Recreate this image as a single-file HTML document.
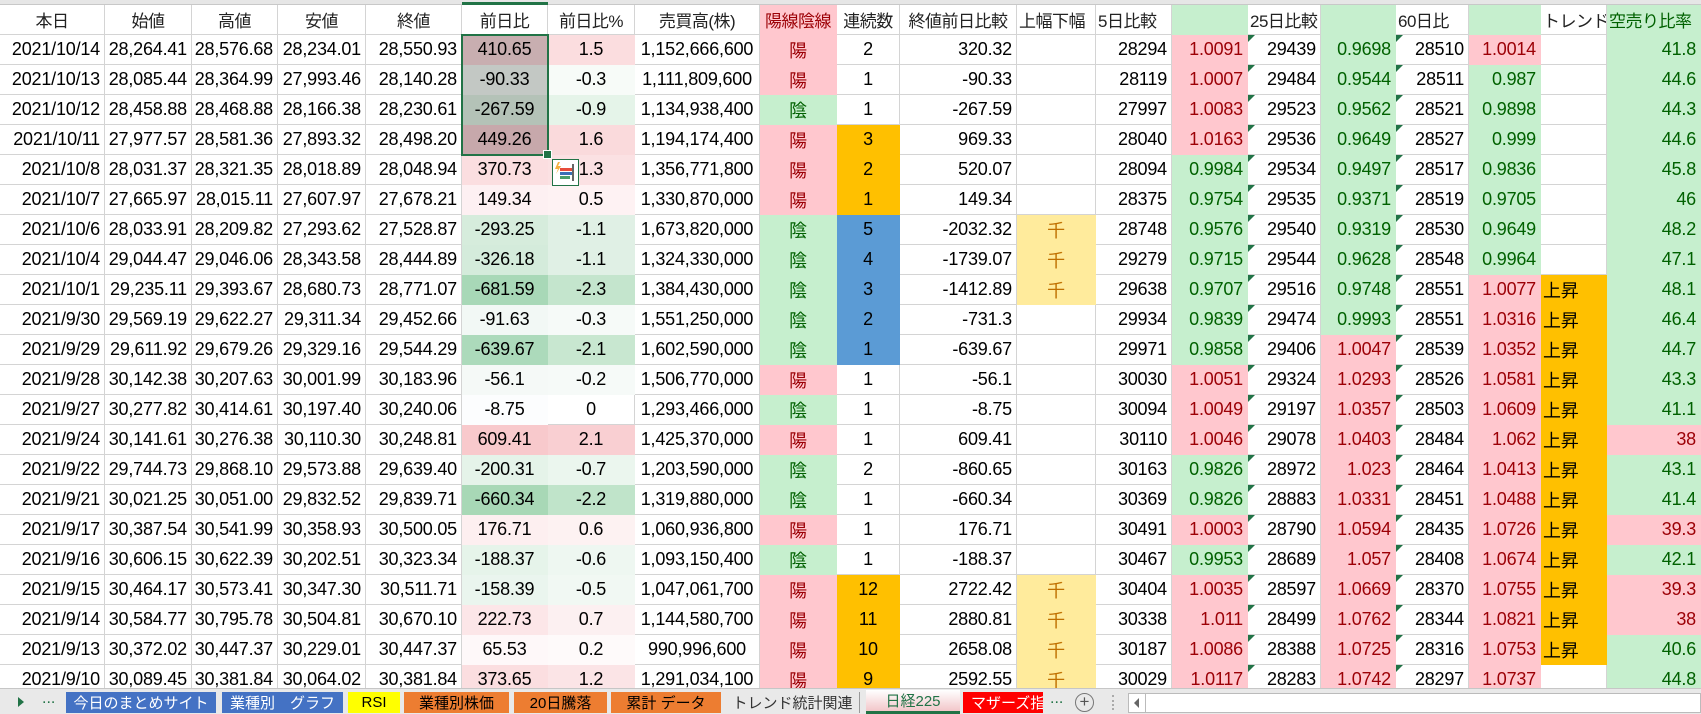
<!DOCTYPE html>
<html><head><meta charset="utf-8">
<style>
*{box-sizing:border-box;margin:0;padding:0}
body{width:1701px;height:714px;overflow:hidden;background:#fff;font-family:"Liberation Sans","Noto Sans CJK JP",sans-serif;position:relative}
#strip{position:absolute;left:0;top:0;width:1701px;height:5px;background:#e6e6e6;border-bottom:1px solid #c8c8c8}
#grid{position:absolute;left:0;top:5px;display:grid;grid-template-columns:105px 87px 86px 88px 96px 86px 87px 125px 77px 63px 117px 79px 76px 76px 73px 75px 73px 72px 66px 94px;grid-auto-rows:30px;font-size:18px;letter-spacing:-0.2px;color:#000}
#grid>div{border-right:1px solid #d4d4d4;border-bottom:1px solid #d4d4d4;display:flex;align-items:center;justify-content:flex-end;padding-right:4px;white-space:nowrap;overflow:hidden;position:relative}
#grid>div.h{justify-content:center;padding:0;color:#222;font-size:17px;letter-spacing:-0.5px}
#grid>div.hl{justify-content:flex-start;padding-left:2px;color:#222;font-size:17px;letter-spacing:-0.5px}
#grid>div.c{justify-content:center;padding:0}
.p{background:#ffc7ce;border-color:#ffc7ce!important;color:#9c0006!important}
.g{background:#c6efce;border-color:#c6efce!important;color:#006100!important}
.y{background:#ffeb9c;border-color:#ffeb9c!important;color:#c07000!important}
.o{background:#ffc000;border-color:#ffc000!important}
.b{background:#5b9bd5;border-color:#5b9bd5!important}
.t::before{content:"";position:absolute;left:0;top:0;border-top:7px solid #217346;border-right:7px solid transparent}
#sel{position:absolute;left:461px;top:34px;width:88px;height:122px;border:2px solid #217346}
#sel::after{content:"";position:absolute;right:-5px;bottom:-5px;width:7px;height:7px;background:#217346;border:1px solid #fff}
#qa{position:absolute;left:552px;top:159px;width:27px;height:27px;border:1px solid #217346;background:#fff}
#tabs{position:absolute;left:0;top:688px;width:1701px;height:26px;background:#e9e9e9;border-top:1px solid #c6c6c6;font-size:15px}
.tab{position:absolute;top:3px;height:21px;display:flex;align-items:center;justify-content:center;white-space:nowrap;overflow:hidden}
</style></head><body>
<div id="strip"></div>
<div style="position:absolute;left:462px;top:2px;width:86px;height:3px;background:#217346"></div>
<div id="grid">
<div class="h">本日</div><div class="h">始値</div><div class="h">高値</div><div class="h">安値</div><div class="h">終値</div><div class="h">前日比</div><div class="h">前日比%</div><div class="h">売買高(株)</div><div class="h p">陽線陰線</div><div class="h">連続数</div><div class="h">終値前日比較</div><div class="hl">上幅下幅</div><div class="hl">5日比較</div><div class="hl g"></div><div class="hl">25日比較</div><div class="hl g"></div><div class="hl">60日比</div><div class="hl g"></div><div class="hl">トレンド</div><div class="hl g">空売り比率</div>

<div>2021/10/14</div><div>28,264.41</div><div>28,576.68</div><div>28,234.01</div><div>28,550.93</div><div class="c" style="background:#c8aeb0;border-color:#c8aeb0">410.65</div><div class="c" style="background:#fbdddf;border-color:#fbdddf">1.5</div><div class="c">1,152,666,600</div><div class="c p">陽</div><div class="c">2</div><div>320.32</div><div></div><div>28294</div><div class="p">1.0091</div><div class="t">29439</div><div class="g">0.9698</div><div class="t">28510</div><div class="p">1.0014</div><div></div><div class="g">41.8</div>

<div>2021/10/13</div><div>28,085.44</div><div>28,364.99</div><div>27,993.46</div><div>28,140.28</div><div class="c" style="background:#c3c8c4;border-color:#c3c8c4">-90.33</div><div class="c" style="background:#f7fbf8;border-color:#f7fbf8">-0.3</div><div class="c">1,111,809,600</div><div class="c p">陽</div><div class="c">1</div><div>-90.33</div><div></div><div>28119</div><div class="p">1.0007</div><div class="t">29484</div><div class="g">0.9544</div><div class="t">28511</div><div class="g">0.987</div><div></div><div class="g">44.6</div>

<div>2021/10/12</div><div>28,458.88</div><div>28,468.88</div><div>28,166.38</div><div>28,230.61</div><div class="c" style="background:#b4c2b7;border-color:#b4c2b7">-267.59</div><div class="c" style="background:#e5f4e9;border-color:#e5f4e9">-0.9</div><div class="c">1,134,938,400</div><div class="c g">陰</div><div class="c">1</div><div>-267.59</div><div></div><div>27997</div><div class="p">1.0083</div><div class="t">29523</div><div class="g">0.9562</div><div class="t">28521</div><div class="g">0.9898</div><div></div><div class="g">44.3</div>

<div>2021/10/11</div><div>27,977.57</div><div>28,581.36</div><div>27,893.32</div><div>28,498.20</div><div class="c" style="background:#c7a8ab;border-color:#c7a8ab">449.26</div><div class="c" style="background:#fadadc;border-color:#fadadc">1.6</div><div class="c">1,194,174,400</div><div class="c p">陽</div><div class="c o">3</div><div>969.33</div><div></div><div>28040</div><div class="p">1.0163</div><div class="t">29536</div><div class="g">0.9649</div><div class="t">28527</div><div class="g">0.999</div><div></div><div class="g">44.6</div>

<div>2021/10/8</div><div>28,031.37</div><div>28,321.35</div><div>28,018.89</div><div>28,048.94</div><div class="c" style="background:#fbdee0;border-color:#fbdee0">370.73</div><div class="c" style="background:#fbe1e3;border-color:#fbe1e3">1.3</div><div class="c">1,356,771,800</div><div class="c p">陽</div><div class="c o">2</div><div>520.07</div><div></div><div>28094</div><div class="g">0.9984</div><div class="t">29534</div><div class="g">0.9497</div><div class="t">28517</div><div class="g">0.9836</div><div></div><div class="g">45.8</div>

<div>2021/10/7</div><div>27,665.97</div><div>28,015.11</div><div>27,607.97</div><div>27,678.21</div><div class="c" style="background:#fdf0f2;border-color:#fdf0f2">149.34</div><div class="c" style="background:#fef2f3;border-color:#fef2f3">0.5</div><div class="c">1,330,870,000</div><div class="c p">陽</div><div class="c o">1</div><div>149.34</div><div></div><div>28375</div><div class="g">0.9754</div><div class="t">29535</div><div class="g">0.9371</div><div class="t">28519</div><div class="g">0.9705</div><div></div><div class="g">46</div>

<div>2021/10/6</div><div>28,033.91</div><div>28,209.82</div><div>27,293.62</div><div>27,528.87</div><div class="c" style="background:#d6ecdc;border-color:#d6ecdc">-293.25</div><div class="c" style="background:#e0f0e5;border-color:#e0f0e5">-1.1</div><div class="c">1,673,820,000</div><div class="c g">陰</div><div class="c b">5</div><div>-2032.32</div><div class="c y">千</div><div>28748</div><div class="g">0.9576</div><div class="t">29540</div><div class="g">0.9319</div><div class="t">28530</div><div class="g">0.9649</div><div></div><div class="g">48.2</div>

<div>2021/10/4</div><div>29,044.47</div><div>29,046.06</div><div>28,343.58</div><div>28,444.89</div><div class="c" style="background:#d4ebdb;border-color:#d4ebdb">-326.18</div><div class="c" style="background:#e0f0e5;border-color:#e0f0e5">-1.1</div><div class="c">1,324,330,000</div><div class="c g">陰</div><div class="c b">4</div><div>-1739.07</div><div class="c y">千</div><div>29279</div><div class="g">0.9715</div><div class="t">29544</div><div class="g">0.9628</div><div class="t">28548</div><div class="g">0.9964</div><div></div><div class="g">47.1</div>

<div>2021/10/1</div><div>29,235.11</div><div>29,393.67</div><div>28,680.73</div><div>28,771.07</div><div class="c" style="background:#a8d8b7;border-color:#a8d8b7">-681.59</div><div class="c" style="background:#c4e5cd;border-color:#c4e5cd">-2.3</div><div class="c">1,384,430,000</div><div class="c g">陰</div><div class="c b">3</div><div>-1412.89</div><div class="c y">千</div><div>29638</div><div class="g">0.9707</div><div class="t">29516</div><div class="g">0.9748</div><div class="t">28551</div><div class="p">1.0077</div><div class="o" style="justify-content:flex-start;padding-left:2px">上昇</div><div class="g">48.1</div>

<div>2021/9/30</div><div>29,569.19</div><div>29,622.27</div><div>29,311.34</div><div>29,452.66</div><div class="c" style="background:#f2f8f5;border-color:#f2f8f5">-91.63</div><div class="c" style="background:#f6faf8;border-color:#f6faf8">-0.3</div><div class="c">1,551,250,000</div><div class="c g">陰</div><div class="c b">2</div><div>-731.3</div><div></div><div>29934</div><div class="g">0.9839</div><div class="t">29474</div><div class="g">0.9993</div><div class="t">28551</div><div class="p">1.0316</div><div class="o" style="justify-content:flex-start;padding-left:2px">上昇</div><div class="g">46.4</div>

<div>2021/9/29</div><div>29,611.92</div><div>29,679.26</div><div>29,329.16</div><div>29,544.29</div><div class="c" style="background:#acdabb;border-color:#acdabb">-639.67</div><div class="c" style="background:#c8e7d0;border-color:#c8e7d0">-2.1</div><div class="c">1,602,590,000</div><div class="c g">陰</div><div class="c b">1</div><div>-639.67</div><div></div><div>29971</div><div class="g">0.9858</div><div class="t">29406</div><div class="p">1.0047</div><div class="t">28539</div><div class="p">1.0352</div><div class="o" style="justify-content:flex-start;padding-left:2px">上昇</div><div class="g">44.7</div>

<div>2021/9/28</div><div>30,142.38</div><div>30,207.63</div><div>30,001.99</div><div>30,183.96</div><div class="c" style="background:#f5f9f7;border-color:#f5f9f7">-56.1</div><div class="c" style="background:#f6faf8;border-color:#f6faf8">-0.2</div><div class="c">1,506,770,000</div><div class="c p">陽</div><div class="c">1</div><div>-56.1</div><div></div><div>30030</div><div class="p">1.0051</div><div class="t">29324</div><div class="p">1.0293</div><div class="t">28526</div><div class="p">1.0581</div><div class="o" style="justify-content:flex-start;padding-left:2px">上昇</div><div class="g">43.3</div>

<div>2021/9/27</div><div>30,277.82</div><div>30,414.61</div><div>30,197.40</div><div>30,240.06</div><div class="c" style="background:#fcfdfe;border-color:#fcfdfe">-8.75</div><div class="c">0</div><div class="c">1,293,466,000</div><div class="c g">陰</div><div class="c">1</div><div>-8.75</div><div></div><div>30094</div><div class="p">1.0049</div><div class="t">29197</div><div class="p">1.0357</div><div class="t">28503</div><div class="p">1.0609</div><div class="o" style="justify-content:flex-start;padding-left:2px">上昇</div><div class="g">41.1</div>

<div>2021/9/24</div><div>30,141.61</div><div>30,276.38</div><div>30,110.30</div><div>30,248.81</div><div class="c" style="background:#f8c9cc;border-color:#f8c9cc">609.41</div><div class="c" style="background:#f9cfd2;border-color:#f9cfd2">2.1</div><div class="c">1,425,370,000</div><div class="c p">陽</div><div class="c">1</div><div>609.41</div><div></div><div>30110</div><div class="p">1.0046</div><div class="t">29078</div><div class="p">1.0403</div><div class="t">28484</div><div class="p">1.062</div><div class="o" style="justify-content:flex-start;padding-left:2px">上昇</div><div class="p">38</div>

<div>2021/9/22</div><div>29,744.73</div><div>29,868.10</div><div>29,573.88</div><div>29,639.40</div><div class="c" style="background:#e5f3e9;border-color:#e5f3e9">-200.31</div><div class="c" style="background:#ebf6ee;border-color:#ebf6ee">-0.7</div><div class="c">1,203,590,000</div><div class="c g">陰</div><div class="c">2</div><div>-860.65</div><div></div><div>30163</div><div class="g">0.9826</div><div class="t">28972</div><div class="p">1.023</div><div class="t">28464</div><div class="p">1.0413</div><div class="o" style="justify-content:flex-start;padding-left:2px">上昇</div><div class="g">43.1</div>

<div>2021/9/21</div><div>30,021.25</div><div>30,051.00</div><div>29,832.52</div><div>29,839.71</div><div class="c" style="background:#a8d8b6;border-color:#a8d8b6">-660.34</div><div class="c" style="background:#c0e4ca;border-color:#c0e4ca">-2.2</div><div class="c">1,319,880,000</div><div class="c g">陰</div><div class="c">1</div><div>-660.34</div><div></div><div>30369</div><div class="g">0.9826</div><div class="t">28883</div><div class="p">1.0331</div><div class="t">28451</div><div class="p">1.0488</div><div class="o" style="justify-content:flex-start;padding-left:2px">上昇</div><div class="g">41.4</div>

<div>2021/9/17</div><div>30,387.54</div><div>30,541.99</div><div>30,358.93</div><div>30,500.05</div><div class="c" style="background:#fdeff0;border-color:#fdeff0">176.71</div><div class="c" style="background:#fdf2f2;border-color:#fdf2f2">0.6</div><div class="c">1,060,936,800</div><div class="c p">陽</div><div class="c">1</div><div>176.71</div><div></div><div>30491</div><div class="p">1.0003</div><div class="t">28790</div><div class="p">1.0594</div><div class="t">28435</div><div class="p">1.0726</div><div class="o" style="justify-content:flex-start;padding-left:2px">上昇</div><div class="p">39.3</div>

<div>2021/9/16</div><div>30,606.15</div><div>30,622.39</div><div>30,202.51</div><div>30,323.34</div><div class="c" style="background:#e6f4ea;border-color:#e6f4ea">-188.37</div><div class="c" style="background:#eef7f1;border-color:#eef7f1">-0.6</div><div class="c">1,093,150,400</div><div class="c g">陰</div><div class="c">1</div><div>-188.37</div><div></div><div>30467</div><div class="g">0.9953</div><div class="t">28689</div><div class="p">1.057</div><div class="t">28408</div><div class="p">1.0674</div><div class="o" style="justify-content:flex-start;padding-left:2px">上昇</div><div class="g">42.1</div>

<div>2021/9/15</div><div>30,464.17</div><div>30,573.41</div><div>30,347.30</div><div>30,511.71</div><div class="c" style="background:#eaf5ee;border-color:#eaf5ee">-158.39</div><div class="c" style="background:#f1f8f3;border-color:#f1f8f3">-0.5</div><div class="c">1,047,061,700</div><div class="c p">陽</div><div class="c o">12</div><div>2722.42</div><div class="c y">千</div><div>30404</div><div class="p">1.0035</div><div class="t">28597</div><div class="p">1.0669</div><div class="t">28370</div><div class="p">1.0755</div><div class="o" style="justify-content:flex-start;padding-left:2px">上昇</div><div class="p">39.3</div>

<div>2021/9/14</div><div>30,584.77</div><div>30,795.78</div><div>30,504.81</div><div>30,670.10</div><div class="c" style="background:#fce6e8;border-color:#fce6e8">222.73</div><div class="c" style="background:#fcf0f1;border-color:#fcf0f1">0.7</div><div class="c">1,144,580,700</div><div class="c p">陽</div><div class="c o">11</div><div>2880.81</div><div class="c y">千</div><div>30338</div><div class="p">1.011</div><div class="t">28499</div><div class="p">1.0762</div><div class="t">28344</div><div class="p">1.0821</div><div class="o" style="justify-content:flex-start;padding-left:2px">上昇</div><div class="p">38</div>

<div>2021/9/13</div><div>30,372.02</div><div>30,447.37</div><div>30,229.01</div><div>30,447.37</div><div class="c" style="background:#fef8f9;border-color:#fef8f9">65.53</div><div class="c" style="background:#fefafa;border-color:#fefafa">0.2</div><div class="c">990,996,600</div><div class="c p">陽</div><div class="c o">10</div><div>2658.08</div><div class="c y">千</div><div>30187</div><div class="p">1.0086</div><div class="t">28388</div><div class="p">1.0725</div><div class="t">28316</div><div class="p">1.0753</div><div class="o" style="justify-content:flex-start;padding-left:2px">上昇</div><div class="g">40.6</div>

<div>2021/9/10</div><div>30,089.45</div><div>30,381.84</div><div>30,064.02</div><div>30,381.84</div><div class="c" style="background:#fbdee0;border-color:#fbdee0">373.65</div><div class="c" style="background:#fbe4e6;border-color:#fbe4e6">1.2</div><div class="c">1,291,034,100</div><div class="c p">陽</div><div class="c o">9</div><div>2592.55</div><div class="c y">千</div><div>30029</div><div class="p">1.0117</div><div class="t">28283</div><div class="p">1.0742</div><div class="t">28297</div><div class="p">1.0737</div><div></div><div class="g">44.8</div>
</div>

<div id="sel"></div>
<div id="qa"><svg width="25" height="25" viewBox="0 0 25 25"><path d="M5 2 L2 9 L5 9 L3 14 L8 6 L5 6 L7 2Z" fill="#f5b041"/><rect x="7" y="8" width="12" height="3" fill="#e74c3c"/><rect x="7" y="12" width="14" height="3" fill="#3b6fb6"/><rect x="7" y="16" width="10" height="3" fill="#4a9e6b"/><rect x="19" y="4" width="2" height="17" fill="#666"/></svg></div>

<div id="tabs">
<div style="position:absolute;left:18px;top:8px;width:0;height:0;border-left:6px solid #217346;border-top:5px solid transparent;border-bottom:5px solid transparent"></div>
<div style="position:absolute;left:42px;top:1px;font-size:16px;color:#217346">...</div>
<div class="tab" style="left:66px;width:150px;background:#4472c4;color:#fff">今日のまとめサイト</div>
<div class="tab" style="left:222px;width:121px;background:#4472c4;color:#fff">業種別　グラフ</div>
<div class="tab" style="left:348px;width:52px;background:#ffff00;color:#000">RSI</div>
<div class="tab" style="left:404px;width:105px;background:#ed7d31;color:#000">業種別株価</div>
<div class="tab" style="left:514px;width:93px;background:#ed7d31;color:#000">20日騰落</div>
<div class="tab" style="left:611px;width:110px;background:#ed7d31;color:#000">累計 データ</div>
<div class="tab" style="left:726px;width:134px;color:#333;border-right:1px solid #999">トレンド統計関連</div>
<div class="tab" style="left:866px;width:94px;top:1px;height:24px;background:linear-gradient(#fff,#f2c6c9);color:#217346;border-bottom:3px solid #217346">日経225</div>
<div class="tab" style="left:963px;width:80px;background:#ff0000;color:#fff;justify-content:flex-start;padding-left:8px">マザーズ指</div>
<div style="position:absolute;left:1050px;top:1px;font-size:16px;color:#217346">...</div>
<div style="position:absolute;left:1075px;top:4px;width:19px;height:19px;border:1px solid #777;border-radius:50%;text-align:center;line-height:16px;font-size:17px;color:#555">+</div>
<div style="position:absolute;left:1112px;top:6px;width:2px;height:15px;border-left:2px dotted #aaa"></div>
<div style="position:absolute;left:1128px;top:4px;width:573px;height:20px;background:#fff;border:1px solid #bbb"></div>
<div style="position:absolute;left:1134px;top:9px;width:0;height:0;border-right:5px solid #666;border-top:5px solid transparent;border-bottom:5px solid transparent"></div>
<div style="position:absolute;left:1145px;top:4px;width:1px;height:20px;background:#bbb"></div>
</div>
</body></html>
